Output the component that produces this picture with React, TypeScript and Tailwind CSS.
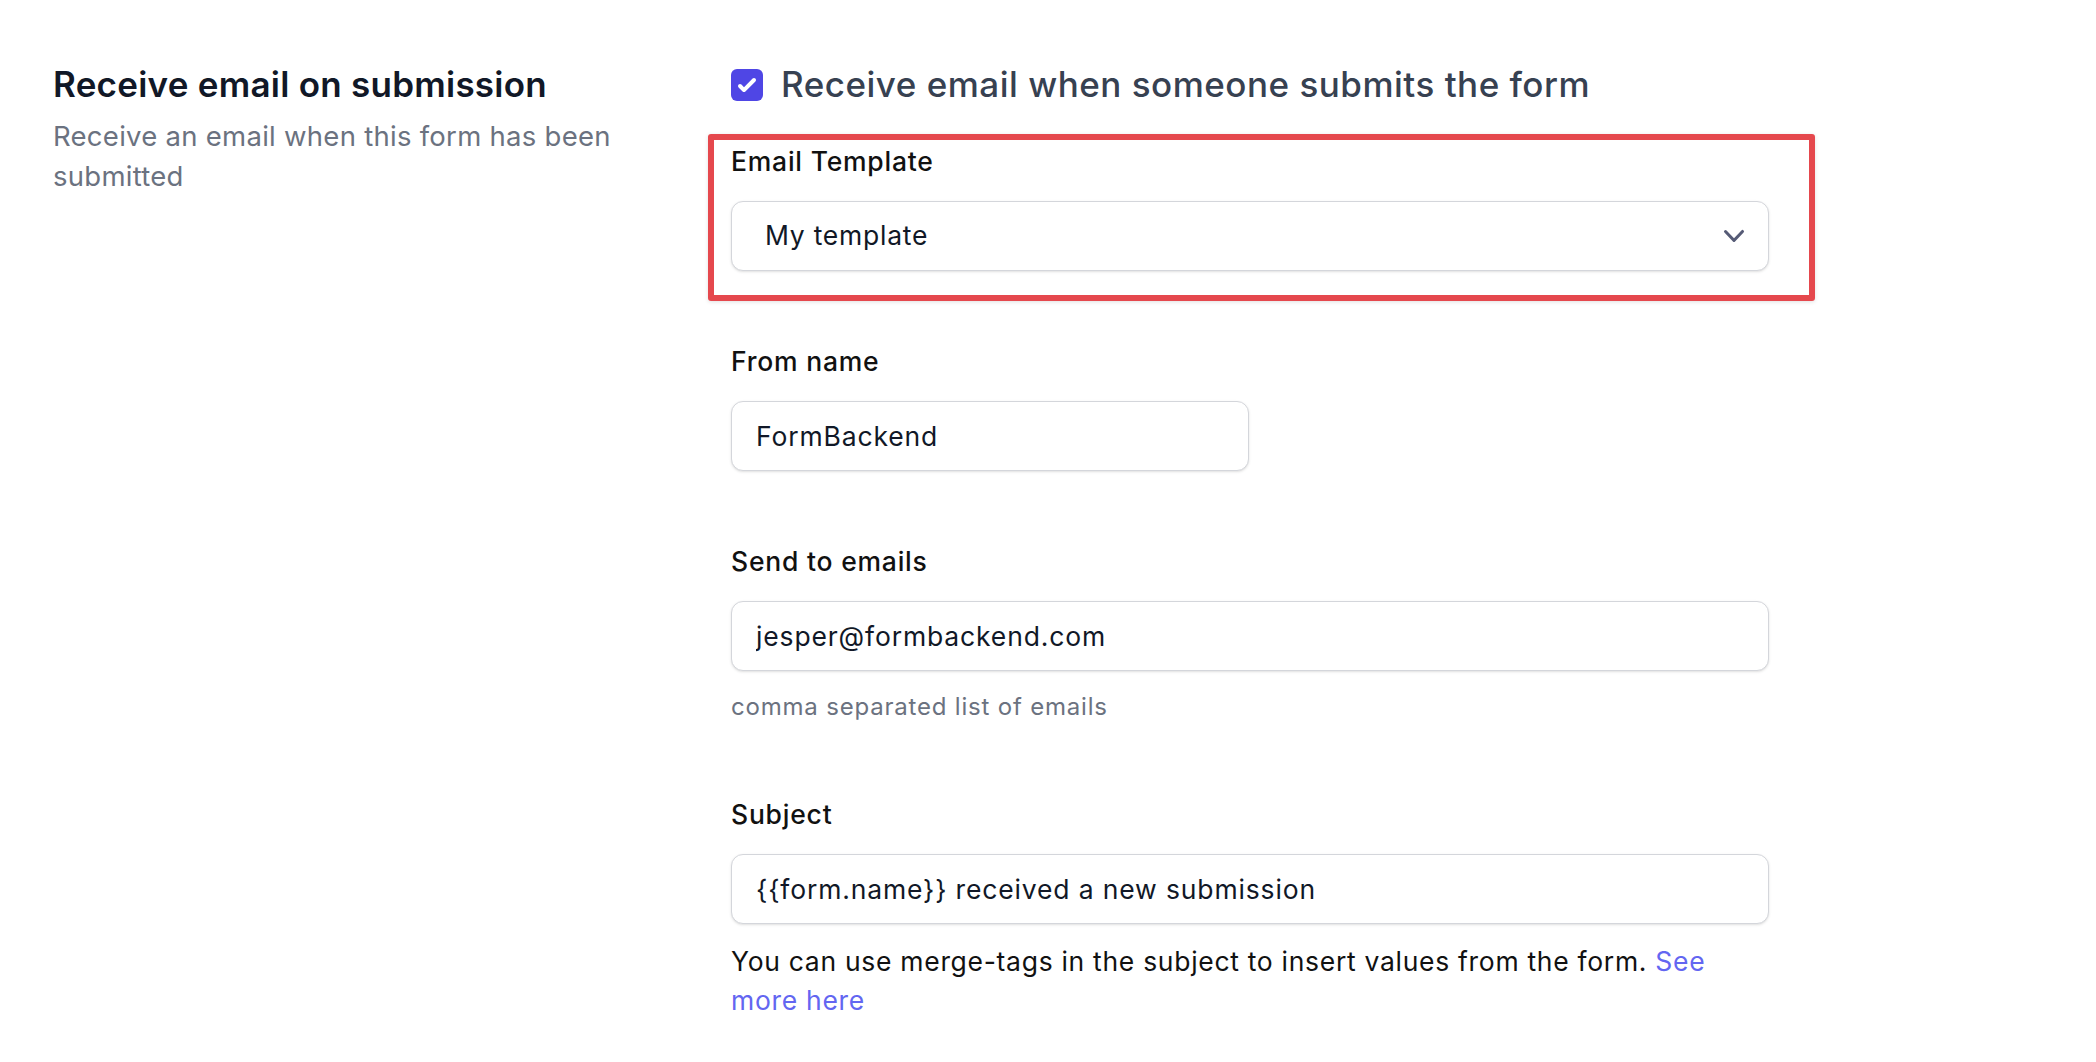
import type { ReactNode } from "react";

function Label({ children }: { children: ReactNode }) {
  return (
    <div className="text-[26.5px] leading-[40px] font-medium tracking-[0.78px] text-[#111111]">
      {children}
    </div>
  );
}

function TextInput({ value, className = "" }: { value: string; className?: string }) {
  return (
    <input
      readOnly
      defaultValue={value}
      className={`mt-[20px] block h-[70px] rounded-xl border-[1.5px] border-[#d4d6db] bg-white px-[24px] text-[26.5px] tracking-[0.85px] text-[#111827] shadow-sm outline-none ${className}`}
    />
  );
}

function ChevronDown({ className }: { className?: string }) {
  return (
    <svg viewBox="0 0 20 20" fill="currentColor" className={className} aria-hidden>
      <path
        fillRule="evenodd"
        d="M5.23 7.21a.75.75 0 011.06.02L10 11.168l3.71-3.938a.75.75 0 111.08 1.04l-4.25 4.5a.75.75 0 01-1.08 0l-4.25-4.5a.75.75 0 01.02-1.06z"
        clipRule="evenodd"
      />
    </svg>
  );
}

export default function App() {
  return (
    <div className="min-h-screen bg-white pt-[60px] pl-[53px] font-['Inter',sans-serif] antialiased">
      <div className="flex">
        {/* left column */}
        <div className="w-[620px] shrink-0">
          <h2 className="text-[35px] leading-[49px] font-semibold tracking-[0.25px] text-[#111827]">
            Receive email on submission
          </h2>
          <p className="mt-[7px] text-[27.5px] leading-[40px] tracking-[0.27px] text-[#6b7280]">
            Receive an email when this form has been submitted
          </p>
        </div>

        {/* right column */}
        <div className="ml-[58px] w-[1038px]">
          <label className="flex items-center gap-[18px]">
            <span className="flex h-[32px] w-[32px] items-center justify-center rounded-[6px] bg-[#4f46e5]">
              <svg viewBox="0 0 16 16" fill="white" className="h-[32px] w-[32px]" aria-hidden>
                <path d="M12.207 4.793a1 1 0 010 1.414l-5 5a1 1 0 01-1.414 0l-2-2a1 1 0 011.414-1.414L6.5 9.086l4.293-4.293a1 1 0 011.414 0z" />
              </svg>
            </span>
            <span className="text-[35px] leading-[49px] font-medium tracking-[0.5px] text-[#374151]">
              Receive email when someone submits the form
            </span>
          </label>

          <div className="relative mt-[32px]">
            <Label>Email Template</Label>
            <div className="mt-[20px] flex h-[70px] items-center justify-between rounded-xl border-[1.5px] border-[#d4d6db] bg-white pr-[14px] pl-[33px] shadow-sm">
              <span className="text-[26.5px] tracking-[0.75px] text-[#111827]">My template</span>
              <ChevronDown className="h-[40px] w-[40px] text-[#565b76]" />
            </div>
            {/* annotation frame */}
            <div className="pointer-events-none absolute -top-[7px] -right-[46px] -bottom-[30px] -left-[23px] rounded-[3px] border-[6px] border-[#e5484d] shadow-[0_1px_4px_rgba(0,0,0,0.12)]" />
          </div>

          <div className="mt-[70px]">
            <Label>From name</Label>
            <TextInput value="FormBackend" className="w-[518px]" />
          </div>

          <div className="mt-[70px]">
            <Label>Send to emails</Label>
            <TextInput value="jesper@formbackend.com" className="w-full" />
            <p className="mt-[18px] text-[24px] leading-[35px] tracking-[0.8px] text-[#6b7280]">
              comma separated list of emails
            </p>
          </div>

          <div className="mt-[70px]">
            <Label>Subject</Label>
            <TextInput value="{{form.name}} received a new submission" className="w-full" />
            <p className="mt-[18px] text-[26.5px] leading-[39px] tracking-[0.7px] text-[#111111]">
              You can use merge-tags in the subject to insert values from the form.{" "}
              <a href="#" className="text-[#6366f1]">
                See more here
              </a>
            </p>
          </div>
        </div>
      </div>
    </div>
  );
}
